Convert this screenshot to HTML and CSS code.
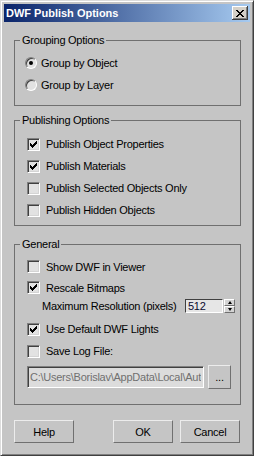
FILE: index.html
```html
<!DOCTYPE html>
<html lang="en">
<head>
    <meta charset="UTF-8">
    <title>DWF Publish Options</title>
    <link rel="stylesheet" href="styles.css">
</head>
<body>
    <div class="window">
        <div class="titlebar">
            <span class="title">DWF Publish Options</span>
            <button class="close" aria-label="Close">
                <svg width="8" height="7" viewBox="0 0 8 7" shape-rendering="crispEdges">
                    <path d="M0 0h2v1h-2z M6 0h2v1h-2z M1 1h2v1h-2z M5 1h2v1h-2z M2 2h4v1h-4z M3 3h2v1h-2z M2 4h4v1h-4z M1 5h2v1h-2z M5 5h2v1h-2z M0 6h2v1h-2z M6 6h2v1h-2z" fill="#000"/>
                </svg>
            </button>
        </div>

        <div class="body">
            <fieldset class="group grouping">
                <legend>Grouping Options</legend>
                <label class="row radio-row"><span class="radio checked"></span>Group by Object</label>
                <label class="row radio-row"><span class="radio"></span>Group by Layer</label>
            </fieldset>

            <fieldset class="group publishing">
                <legend>Publishing Options</legend>
                <label class="row"><span class="check checked"><svg width="7" height="7" viewBox="0 0 7 7" shape-rendering="crispEdges"><path d="M6 0h1v3h-1z M5 1h1v3h-1z M4 2h1v3h-1z M3 3h1v3h-1z M2 4h1v3h-1z M1 3h1v3h-1z M0 2h1v3h-1z" fill="#000"/></svg></span>Publish Object Properties</label>
                <label class="row"><span class="check checked"><svg width="7" height="7" viewBox="0 0 7 7" shape-rendering="crispEdges"><path d="M6 0h1v3h-1z M5 1h1v3h-1z M4 2h1v3h-1z M3 3h1v3h-1z M2 4h1v3h-1z M1 3h1v3h-1z M0 2h1v3h-1z" fill="#000"/></svg></span>Publish Materials</label>
                <label class="row"><span class="check"></span>Publish Selected Objects Only</label>
                <label class="row"><span class="check"></span>Publish Hidden Objects</label>
            </fieldset>

            <fieldset class="group general">
                <legend>General</legend>
                <label class="row short"><span class="check"></span>Show DWF in Viewer</label>
                <label class="row short"><span class="check checked"><svg width="7" height="7" viewBox="0 0 7 7" shape-rendering="crispEdges"><path d="M6 0h1v3h-1z M5 1h1v3h-1z M4 2h1v3h-1z M3 3h1v3h-1z M2 4h1v3h-1z M1 3h1v3h-1z M0 2h1v3h-1z" fill="#000"/></svg></span>Rescale Bitmaps</label>
                <div class="spin-row">
                    <span class="spin-label">Maximum Resolution (pixels)</span>
                    <input class="spin-field" type="text" value="512">
                    <span class="spin-arrows">
                        <span class="arrow up"></span>
                        <span class="arrow down"></span>
                    </span>
                </div>
                <label class="row lights"><span class="check checked"><svg width="7" height="7" viewBox="0 0 7 7" shape-rendering="crispEdges"><path d="M6 0h1v3h-1z M5 1h1v3h-1z M4 2h1v3h-1z M3 3h1v3h-1z M2 4h1v3h-1z M1 3h1v3h-1z M0 2h1v3h-1z" fill="#000"/></svg></span>Use Default DWF Lights</label>
                <label class="row"><span class="check"></span>Save Log File:</label>
                <div class="path-row">
                    <input class="path" type="text" value="C:\Users\Borislav\AppData\Local\Autodesk\3dsMax\dwf.log" disabled>
                    <button class="btn browse">...</button>
                </div>
            </fieldset>

            <div class="actions">
                <button class="btn">Help</button>
                <div class="actions-right">
                    <button class="btn">OK</button>
                    <button class="btn">Cancel</button>
                </div>
            </div>
        </div>
    </div>
</body>
</html>
```

FILE: styles.css
```css
* {
    box-sizing: border-box;
}

body {
    margin: 0;
    background: #c5c5c5;
    font-family: "Liberation Sans", Arial, sans-serif;
    font-size: 11px;
    color: #000;
}

.window {
    width: 254px;
    height: 456px;
    display: flex;
    flex-direction: column;
    background: #c5c5c5;
    border: 1px solid;
    border-color: #dcdcdc #404040 #404040 #dcdcdc;
    padding: 3px;
    box-shadow: inset 1px 1px #fff, inset -1px -1px #808080;
}

.titlebar {
    height: 18px;
    display: flex;
    align-items: center;
    justify-content: space-between;
    padding: 0 2px;
    background: linear-gradient(to right, #0a246a, #a6caf0);
}

.title {
    color: #fff;
    font-weight: bold;
    font-size: 11px;
}

.close {
    width: 16px;
    height: 14px;
    padding: 0;
    border: 0;
    background: #d4d0c8;
    box-shadow: inset -1px -1px #404040, inset 1px 1px #fff, inset -2px -2px #808080;
    display: flex;
    align-items: center;
    justify-content: center;
}

.body {
    letter-spacing: -0.25px;
}

/* group boxes */
.group {
    margin: 0 9px 0 10px;
    padding: 0 5px;
    border: 1px solid #707070;
}

.group legend {
    padding: 0 2px;
    height: 13px;
    line-height: 13px;
}

.grouping {
    margin-top: 12px;
    padding-top: 5px;
    padding-bottom: 9px;
}

.publishing {
    margin-top: 8px;
    padding-top: 6px;
    padding-bottom: 4px;
}

.general {
    margin-top: 12px;
    padding-top: 5px;
    padding-bottom: 15px;
}

.row {
    display: flex;
    align-items: center;
    height: 22px;
    margin-left: 7px;
}

.row.short {
    height: 21px;
}

.row.lights {
    margin-top: 4px;
}

.radio-row {
    margin-left: 5px;
}

/* checkbox + radio */
.check {
    flex: none;
    width: 13px;
    height: 13px;
    margin-right: 6px;
    border: 1px solid;
    border-color: #808080 #fff #fff #808080;
    box-shadow: inset 1px 1px #404040, inset -1px -1px #d4d4d4;
    background: #e2e2e2;
    display: flex;
    align-items: center;
    justify-content: center;
}

.radio {
    flex: none;
    position: relative;
    width: 12px;
    height: 12px;
    margin-right: 4px;
    border-radius: 50%;
    border: 1px solid;
    border-color: #808080 #fff #fff #808080;
    box-shadow: inset 1px 1px #404040;
    background: #e2e2e2;
}

.radio.checked::after {
    content: "";
    position: absolute;
    left: 3px;
    top: 3px;
    width: 4px;
    height: 4px;
    border-radius: 50%;
    background: #000;
}

/* spinner */
.spin-row {
    display: flex;
    align-items: center;
    height: 16px;
    margin-left: 22px;
}

.spin-label {
    flex: 1;
}

.spin-field {
    width: 38px;
    height: 14px;
    padding: 0 2px;
    border: 1px solid;
    border-color: #404040 #fff #fff #404040;
    background: #e6e6e6;
    font: inherit;
    letter-spacing: inherit;
    color: #0a0a30;
}

.spin-arrows {
    width: 11px;
    height: 14px;
    margin-left: 1px;
    display: flex;
    flex-direction: column;
}

.arrow {
    flex: 1;
    display: flex;
    align-items: center;
    justify-content: center;
    background: #d4d4d4;
    border: 1px solid;
    border-color: #fff #707070 #707070 #fff;
}

.arrow::after {
    content: "";
    border-left: 2px solid transparent;
    border-right: 2px solid transparent;
}

.arrow.up::after {
    border-bottom: 3px solid #000;
}

.arrow.down::after {
    border-top: 3px solid #000;
}

/* log file path */
.path-row {
    display: flex;
    align-items: center;
    gap: 4px;
    margin: 3px 0 0 7px;
}

.path {
    width: 177px;
    height: 22px;
    padding: 0 2px;
    border: 1px solid;
    border-color: #808080 #fff #fff #808080;
    box-shadow: inset 1px 1px #404040;
    background: #dcdcdc;
    font: inherit;
    letter-spacing: inherit;
    color: #707070;
}

/* buttons */
.btn {
    width: 60px;
    height: 23px;
    padding: 0;
    background: #c5c5c5;
    border: 1px solid;
    border-color: #ececec #707070 #707070 #ececec;
    font: inherit;
    letter-spacing: inherit;
    color: #000;
}

.btn.browse {
    width: 23px;
    height: 24px;
}

.actions {
    display: flex;
    justify-content: space-between;
    margin: 15px 10px 0 10px;
}

.actions-right {
    display: flex;
    gap: 7px;
}
```
